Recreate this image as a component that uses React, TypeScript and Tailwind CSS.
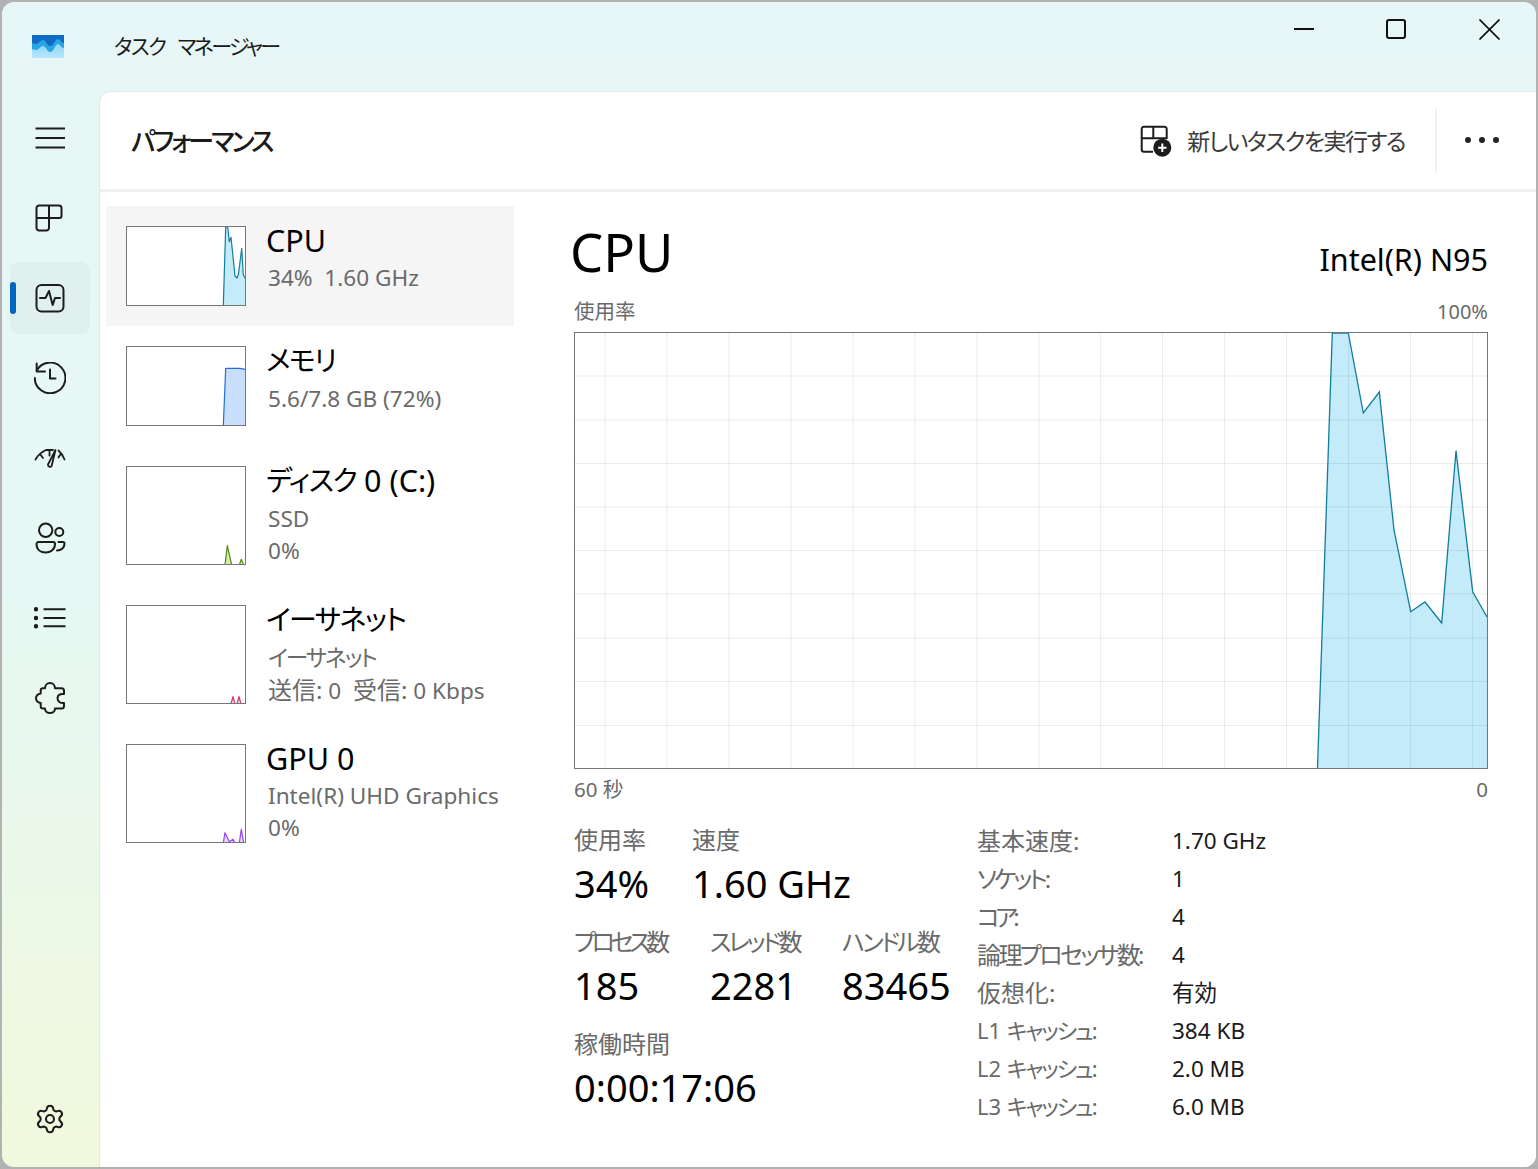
import React from "react";
import { Settings } from "lucide-react";

const S = ({ children }: { children: React.ReactNode }) => (
  <svg width="32" height="32" viewBox="0 0 32 32" fill="none" stroke="#1c1c1c" strokeWidth="2" strokeLinecap="round" strokeLinejoin="round">
    {children}
  </svg>
);

const NavItem = ({ children, active = false }: { children: React.ReactNode; active?: boolean }) => (
  <div className={`relative flex h-[72px] w-[80px] items-center justify-center rounded-[8px] ${active ? "bg-[#dff0ee]" : ""}`}>
    {active && <div className="absolute left-0 top-[20px] h-[32px] w-[6px] rounded-full bg-[#0067c0]" />}
    {children}
  </div>
);

const Mini = ({ x0, y0, h, fill, stroke, polys }: { x0: number; y0: number; h: number; fill: string; stroke: string; polys: string[] }) => (
  <div className="w-[120px] shrink-0 border border-[#767676] bg-white" style={{ height: h }}>
    <svg width="118" height={h - 2} viewBox={`${x0} ${y0} 118 ${h - 2}`} className="block">
      {polys.map((p, i) => (
        <polygon key={i} points={p} fill={fill} stroke={stroke} strokeWidth="1.2" strokeLinejoin="round" />
      ))}
    </svg>
  </div>
);

const K = ({ children }: { children: React.ReactNode }) => <span className="tracking-[-2px]">{children}</span>;
const KT = ({ children }: { children: React.ReactNode }) => (
  <span className="inline-block -translate-y-[1px] text-[28px] tracking-[-1.5px]">{children}</span>
);
const Big = ({ children }: { children: React.ReactNode }) => <span className="text-[24px]">{children}</span>;
const L = ({ n }: { n: string }) => (
  <span className="inline-block -translate-y-[1px] text-[22px]">{n} <K>キャッシュ:</K></span>
);

const Row = ({
  title, subs, active, children, tall,
}: { title: React.ReactNode; subs: React.ReactNode[]; active?: boolean; children: React.ReactNode; tall?: boolean }) => (
  <div className={`flex w-[408px] p-[20px] ${active ? "bg-[#f5f5f5]" : ""} ${tall ? "h-[139px]" : "h-[120px]"}`}>
    {children}
    <div className="-mt-[1px] ml-[20px] min-w-0 whitespace-pre">
      <div className="mb-[7px] text-[30.5px] leading-[30px] text-black">{title}</div>
      {subs.map((s, i) => (
        <div key={i} className="h-[32px] pl-[2px] text-[22.6px] leading-[32px] text-[#6a6a6a]">{s}</div>
      ))}
    </div>
  </div>
);

const Stat = ({ label, value, w }: { label: React.ReactNode; value: string; w: string }) => (
  <div className={`${w} whitespace-nowrap`}>
    <div className="h-[34px] pt-[2px] text-[24px] leading-[32px] text-[#6a6a6a]">{label}</div>
    <div className="mt-[3px] text-[38px] leading-[48px] text-black">{value}</div>
  </div>
);

const specs: [React.ReactNode, string][] = [
  ["基本速度:", "1.70 GHz"],
  [<span className="tracking-[-3px]">ソケット:</span>, "1"],
  [<span className="tracking-[-4.5px]">コア:</span>, "4"],
  [<span className="tracking-[-2.6px]">論理プロセッサ数:</span>, "4"],
  ["仮想化:", "有効"],
  [<L n="L1" />, "384 KB"],
  [<L n="L2" />, "2.0 MB"],
  [<L n="L3" />, "6.0 MB"],
];

const hLines = [376, 420, 463.5, 507, 550.5, 594, 638, 681.5, 725.5];
const vLines = [605, 667, 729, 791, 853, 915, 977, 1039, 1100.5, 1162.5, 1224.5, 1286.5, 1348.5, 1410.5, 1472.5];
const linePts =
  "1317.5,768 1332.3,333 1348.3,333 1363.3,413 1379.3,392 1394,530 1410.7,611.7 1425,602 1441.7,623 1456,450.7 1472.7,591.7 1487,617";

export default function App() {
  return (
    <div className="h-[1169px] w-[1538px] overflow-hidden bg-[#b2b2b2] p-[2px] font-['Noto_Sans','Noto_Sans_CJK_JP',sans-serif] [font-feature-settings:'palt']">
      <div className="flex h-[1165px] flex-col overflow-hidden rounded-[12px] bg-linear-to-b from-[#e7f6f6] via-[#e6f8f4] to-[#f0f9dc]">
        <div className="flex h-[89px] shrink-0">
          <div className="ml-[30px] mt-[33px] h-[23px] w-[32px]">
            <svg width="32" height="23" viewBox="0 0 32 23" className="block">
              <defs>
                <linearGradient id="lg" x1="0" y1="0" x2="0" y2="1">
                  <stop offset="0" stopColor="#73cdf7" />
                  <stop offset="1" stopColor="#b8e6fc" />
                </linearGradient>
              </defs>
              <rect width="32" height="23" fill="url(#lg)" />
              <path d="M0 0H32V13C29 13 28 9 26 9C23 9 22 17 18 17C15 17 14 11 11 11C8 11 7 15 4 15C2 15 1 14 0 14Z" fill="#29a4e4" />
              <path d="M0 0H32V8C29 8 28 4 26 4C23 4 22 11 18 11C15 11 14 5 11 5C8 5 7 9 4 9C2 9 1 8 0 8Z" fill="#0f6cc4" />
            </svg>
          </div>
          <div className="ml-[50px] mt-[28px] whitespace-pre text-[21px] leading-[32px] tracking-[-1.5px] text-[#1a1a1a] [word-spacing:8px]">
            タスク <span className="tracking-[-2.6px]">マネージャー</span>
          </div>
          <div className="ml-auto flex h-[54px]">
            <div className="flex w-[92px] items-center justify-center">
              <div className="h-[2px] w-[20px] bg-[#111]" />
            </div>
            <div className="flex w-[92px] items-center justify-center">
              <div className="h-[20px] w-[20px] rounded-[3px] border-2 border-[#111]" />
            </div>
            <div className="flex w-[94px] items-center justify-center">
              <svg width="21" height="21" viewBox="0 0 21 21" stroke="#111" strokeWidth="1.7"><path d="M.5 .5L20.500 20.500M20.500 .5L.5 20.500" /></svg>
            </div>
          </div>
        </div>

        <div className="flex min-h-0 flex-1">
          <div className="flex w-[97px] shrink-0 flex-col items-center pb-[12px] pr-[1px] pt-[11px]">
            <div className="flex flex-col gap-2">
              <NavItem>
                <S><path d="M1.500 6.500H31M1.500 16H31M1.500 25.500H31" strokeWidth="1.8" strokeLinecap="butt" /></S>
              </NavItem>
              <NavItem>
                <S><path d="M5 3.500H25a2.500 2.500 0 0 1 2.500 2.500V14a2 2 0 0 1-2 2H15V26a2.500 2.500 0 0 1-2.500 2.500H5A2.500 2.500 0 0 1 2.500 26V6A2.500 2.500 0 0 1 5 3.500ZM2.500 16H15M15 3.500V16" /></S>
              </NavItem>
              <NavItem active>
                <S>
                  <rect x="2.500" y="3" width="27" height="26.500" rx="5" />
                  <path d="M6 16H11.500L15 9L18.700 23L21 16H26" />
                </S>
              </NavItem>
              <NavItem>
                <S>
                  <path d="M2.700 8.500A15.300 15.300 0 1 1 0.800 16" />
                  <path d="M2.700 1.500V9.500H11M16 7.500V16.500H21.500" />
                </S>
              </NavItem>
              <NavItem>
                <S>
                  <path d="M1.500 17.500Q5 11 12 8H19M15.500 8V13.500M24.500 8.500Q28.500 12 30.500 17.500M6 12l3 4M27 11.500l-2.500 4" strokeWidth="1.8" />
                  <path d="M21.500 8L14 22.500a2 2 0 0 0 3.600 1.500Z" strokeWidth="1.8" />
                </S>
              </NavItem>
              <NavItem>
                <S>
                  <circle cx="11.700" cy="8.300" r="6.700" />
                  <circle cx="25.300" cy="10" r="4" />
                  <path d="M2.500 22a2 2 0 0 1 2-2H19a2 2 0 0 1 2 2C21 28 16 30.500 11.700 30.500C7 30.500 2.500 28 2.500 22Z" />
                  <path d="M24.500 20H29a1.500 1.500 0 0 1 1.500 1.500C30.500 25.500 27.500 28.500 23 28.500" />
                </S>
              </NavItem>
              <NavItem>
                <S>
                  <circle cx="2" cy="7.300" r="1.200" fill="#1c1c1c" />
                  <circle cx="2" cy="16" r="1.200" fill="#1c1c1c" />
                  <circle cx="2" cy="24.300" r="1.200" fill="#1c1c1c" />
                  <path d="M9.500 7.300H31.500M9.500 16H31.500M9.500 24.300H31.500" strokeLinecap="butt" />
                </S>
              </NavItem>
              <NavItem>
                <S>
                  <path d="M9 6.300H11C11 3.500 13 1 16 1C19 1 21 3.500 21 6.300H27.500C29 6.300 30 7.300 30 8.800V12C26.500 11.500 23.500 13 23.500 16.300C23.500 19.500 26.500 21.500 30 21V24C30 25.500 29 26.500 27.500 26.500H21C21 29 19 31 16 31C13 31 11 29 11 26.500H9C7.700 26.500 6.700 25.500 6.700 24.300V21C4 20.500 2 19 2 16.300C2 13.500 4 12 6.700 11.500V8.500C6.700 7.200 7.700 6.300 9 6.300Z" />
                </S>
              </NavItem>
            </div>
            <div className="mt-auto flex h-[72px] w-[80px] items-center justify-center">
              <Settings size={32} strokeWidth={1.55} color="#1c1c1c" />
            </div>
          </div>

          <div className="flex min-w-0 flex-1 flex-col rounded-tl-[12px] border-l border-t border-[#dcecea] bg-white">
            <div className="flex h-[100px] shrink-0 items-center border-b-[3px] border-[#f0f0f0] pl-[31px]">
              <div className="mt-[1px] text-[26px] font-medium leading-[36px] tracking-[-3px] text-[#1a1a1a]">パフォーマンス</div>
              <div className="ml-auto flex items-center">
                <svg width="32" height="32" viewBox="0 0 32 32" fill="none" stroke="#1c1c1c" strokeWidth="2" strokeLinejoin="round">
                  <path d="M4 1.700H24.500a2.200 2.200 0 0 1 2.200 2.200V13.300H1.700M13.300 1.700V13.300M4 1.700A2.300 2.300 0 0 0 1.700 4V24.400A2.300 2.300 0 0 0 4 26.700H13" />
                  <circle cx="22.300" cy="22.700" r="9" fill="#1c1c1c" stroke="none" />
                  <path d="M22.300 18.500V26.900M18.100 22.700H26.500" stroke="#fff" strokeWidth="2" />
                </svg>
                <div className="ml-[15px] text-[23px] leading-[32px] tracking-[-1.5px] text-[#3a3a3a]">新しいタスクを実行する</div>
                <div className="ml-[30px] h-[64px] w-[2px] bg-[#f0f0f0]" />
                <div className="-mt-[1px] ml-[28px] mr-[37px] flex gap-[8px]">
                  <div className="h-[6px] w-[6px] rounded-full bg-[#222]" />
                  <div className="h-[6px] w-[6px] rounded-full bg-[#222]" />
                  <div className="h-[6px] w-[6px] rounded-full bg-[#222]" />
                </div>
              </div>
            </div>

            <div className="flex min-h-0 flex-1">
              <div className="ml-[6px] mt-[14px] w-[408px] shrink-0">
                <Row title="CPU" subs={["34%  1.60 GHz"]} active>
                  <Mini x0={127} y0={227} h={80} fill="#c3ebfa" stroke="#137e9f" polys={["223.3,306 225.7,227 227.7,227 229.300,241.700 231,237.300 235,276 237,278 238.500,274 241.700,248.300 243.300,275 245.700,279 245.700,306"]} />
                </Row>
                <Row title={<KT>メモリ</KT>} subs={["5.6/7.8 GB (72%)"]}>
                  <Mini x0={127} y0={347} h={80} fill="#c9ddfd" stroke="#1e6fe0" polys={["223.300,426 225.700,368.300 240,368.300 245.700,369.500 245.700,426"]} />
                </Row>
                <Row title={<><KT>ディスク</KT> 0 (C:)</>} subs={["SSD", "0%"]} tall>
                  <Mini x0={127} y0={467} h={99} fill="#d6ecb4" stroke="#4f8a10" polys={["225,565 227.300,545.700 231.700,565", "239.300,565 241.300,559.300 243.700,565"]} />
                </Row>
                <Row title={<KT>イーサネット</KT>} subs={[<K>イーサネット</K>, <><Big>送信:</Big> 0  <Big>受信:</Big> 0 Kbps</>]} tall>
                  <Mini x0={127} y0={606} h={99} fill="#f8dbe6" stroke="#d1346f" polys={["231,704 233,696.700 235,704", "237,704 239,696.700 241,704"]} />
                </Row>
                <Row title="GPU 0" subs={["Intel(R) UHD Graphics", "0%"]} tall>
                  <Mini x0={127} y0={745} h={99} fill="#ecdcfd" stroke="#9a3ffb" polys={["223.300,843 225,832.700 229.300,841.700 233,839.300 235,843", "239.300,843 241.300,829.300 243.700,843"]} />
                </Row>
              </div>

              <div className="ml-[60px] flex w-[914px] shrink-0 flex-col">
                <div className="mt-[21px] flex h-[78px] items-center justify-between">
                  <div className="-ml-[4px] text-[52.5px] leading-[78px] text-black">CPU</div>
                  <div className="self-end pb-[12px] text-[30.5px] leading-[40px] text-black">Intel(R) N95</div>
                </div>
                <div className="flex h-[41px] items-center justify-between text-[20.500px] text-[#6a6a6a]">
                  <span>使用率</span>
                  <span className="text-[20px]">100%</span>
                </div>
                <div className="h-[437px] w-[914px] border border-[#767676] bg-white">
                  <svg width="912" height="435" viewBox="575 333 912 435" className="block">
                    <polygon points={`${linePts} 1487,768`} fill="#c3ebfa" />
                    {hLines.map((y) => (
                      <line key={y} x1="575" x2="1487" y1={y} y2={y} stroke="#000" strokeOpacity="0.07" />
                    ))}
                    {vLines.map((x) => (
                      <line key={x} y1="333" y2="768" x1={x} x2={x} stroke="#000" strokeOpacity="0.07" />
                    ))}
                    <polyline points={linePts} fill="none" stroke="#127c9d" strokeWidth="1.3" />
                  </svg>
                </div>
                <div className="flex h-[40px] items-center justify-between text-[20.500px] text-[#6a6a6a]">
                  <span>60 秒</span>
                  <span>0</span>
                </div>
                <div className="mt-[13px] flex">
                  <div className="w-[403px] shrink-0">
                    <div className="flex h-[102px]">
                      <Stat label="使用率" value="34%" w="w-[118px]" />
                      <Stat label="速度" value="1.60 GHz" w="w-[200px]" />
                    </div>
                    <div className="flex h-[102px]">
                      <Stat label={<span className="tracking-[-4.4px]">プロセス数</span>} value="185" w="w-[136px]" />
                      <Stat label={<span className="tracking-[-3px]">スレッド数</span>} value="2281" w="w-[132px]" />
                      <Stat label={<span className="tracking-[-2.700px]">ハンドル数</span>} value="83465" w="w-[120px]" />
                    </div>
                    <Stat label="稼働時間" value="0:00:17:06" w="w-[300px]" />
                  </div>
                  <div className="flex flex-col">
                    {specs.map(([k, v], i) => (
                      <div key={i} className="flex h-[38px] items-center whitespace-nowrap text-[23px]">
                        <div className="w-[195px] text-[24px] text-[#6a6a6a]">{k}</div>
                        <div className="text-[22.5px] text-[#1a1a1a]">{v}</div>
                      </div>
                    ))}
                  </div>
                </div>
              </div>
            </div>
          </div>
        </div>
      </div>
    </div>
  );
}
